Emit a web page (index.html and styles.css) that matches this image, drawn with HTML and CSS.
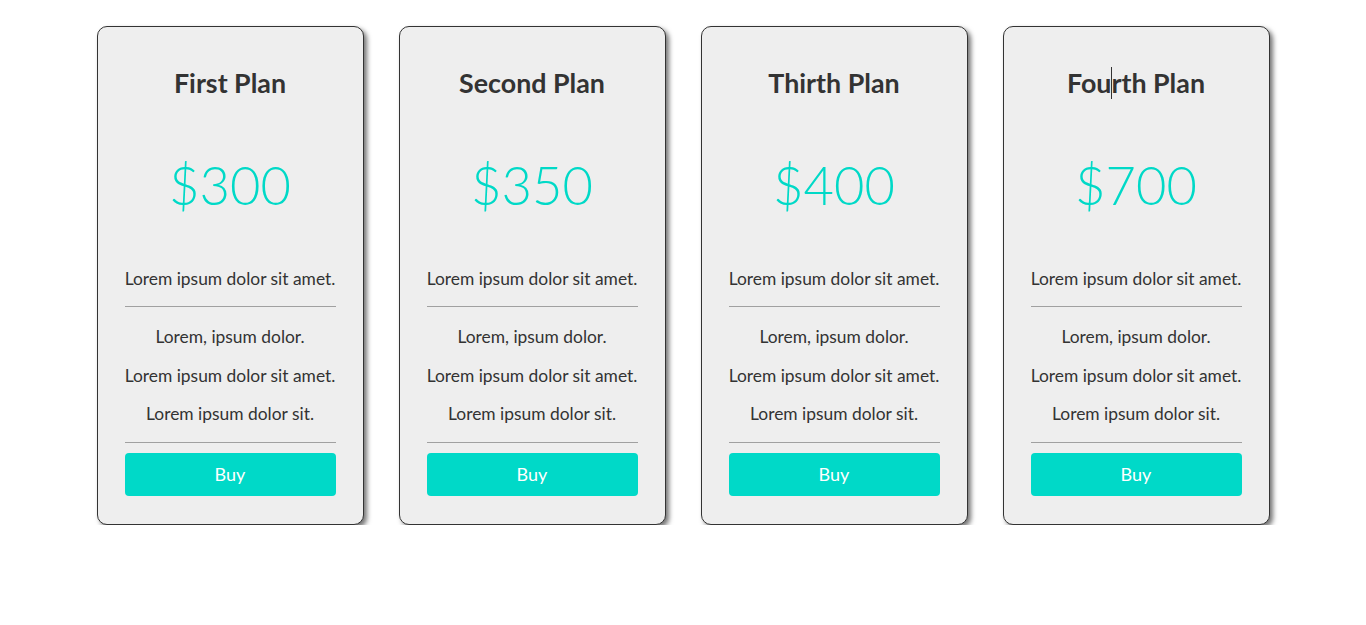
FILE: index.html
```html
<!DOCTYPE html>
<html>
<head>
<meta charset="utf-8">
<link rel="stylesheet" href="styles.css">
</head>
<body>
<main class="plans">
  <section class="card">
    <h2 class="title">First Plan</h2>
    <div class="price">$300</div>
    <p class="item">Lorem ipsum dolor sit amet.</p>
    <hr class="rule rule-top">
    <p class="item">Lorem, ipsum dolor.</p>
    <p class="item">Lorem ipsum dolor sit amet.</p>
    <p class="item">Lorem ipsum dolor sit.</p>
    <hr class="rule rule-bottom">
    <button class="buy">Buy</button>
  </section>
  <section class="card">
    <h2 class="title">Second Plan</h2>
    <div class="price">$350</div>
    <p class="item">Lorem ipsum dolor sit amet.</p>
    <hr class="rule rule-top">
    <p class="item">Lorem, ipsum dolor.</p>
    <p class="item">Lorem ipsum dolor sit amet.</p>
    <p class="item">Lorem ipsum dolor sit.</p>
    <hr class="rule rule-bottom">
    <button class="buy">Buy</button>
  </section>
  <section class="card">
    <h2 class="title">Thirth Plan</h2>
    <div class="price">$400</div>
    <p class="item">Lorem ipsum dolor sit amet.</p>
    <hr class="rule rule-top">
    <p class="item">Lorem, ipsum dolor.</p>
    <p class="item">Lorem ipsum dolor sit amet.</p>
    <p class="item">Lorem ipsum dolor sit.</p>
    <hr class="rule rule-bottom">
    <button class="buy">Buy</button>
  </section>
  <section class="card">
    <h2 class="title">Fou<span class="caret"></span>rth Plan</h2>
    <div class="price">$700</div>
    <p class="item">Lorem ipsum dolor sit amet.</p>
    <hr class="rule rule-top">
    <p class="item">Lorem, ipsum dolor.</p>
    <p class="item">Lorem ipsum dolor sit amet.</p>
    <p class="item">Lorem ipsum dolor sit.</p>
    <hr class="rule rule-bottom">
    <button class="buy">Buy</button>
  </section>
</main>
</body>
</html>
```
FILE: styles.css
```css
* { box-sizing: border-box; }
html, body { margin: 0; padding: 0; background: #fff; }
body { font-family: Lato, "Open Sans", sans-serif; color: #333; }

.plans {
  display: flex;
  justify-content: center;
  gap: 35px;
  padding-top: 26px;
}

.card {
  width: 267px;
  background: #eee;
  border: 1px solid #333;
  border-radius: 10px;
  box-shadow: 3px 3px 5px rgba(0,0,0,0.55);
  padding: 40px 27px 28px;
  display: flex;
  flex-direction: column;
  text-align: center;
}

.title {
  margin: 0;
  font-size: 26.8px;
  font-weight: 700;
  line-height: 32px;
  color: #333;
}

.caret {
  display: inline-block;
  width: 1px;
  height: 32px;
  background: #333;
  vertical-align: top;
  margin-right: -1px;
}

.price {
  margin-top: 52px;
  font-size: 52.5px;
  font-weight: 300;
  line-height: 68px;
  color: #00d9c7;
}

.item {
  margin: 14.5px 0 0;
  font-size: 17.4px;
  line-height: 24px;
  white-space: nowrap;
}

.price + .item { margin-top: 47.5px; }

.rule {
  border: 0;
  height: 1px;
  background: #a0a0a0;
}

.rule-top { margin: 15px 0 0; }
.rule-bottom { margin: 16px 0 0; }

.rule + .item { margin-top: 18.5px; }

.buy {
  margin-top: 10px;
  height: 42.5px;
  border: 0;
  border-radius: 4px;
  background: #00d9c8;
  color: #fff;
  font-family: Lato, sans-serif;
  font-size: 18px;
}
```
